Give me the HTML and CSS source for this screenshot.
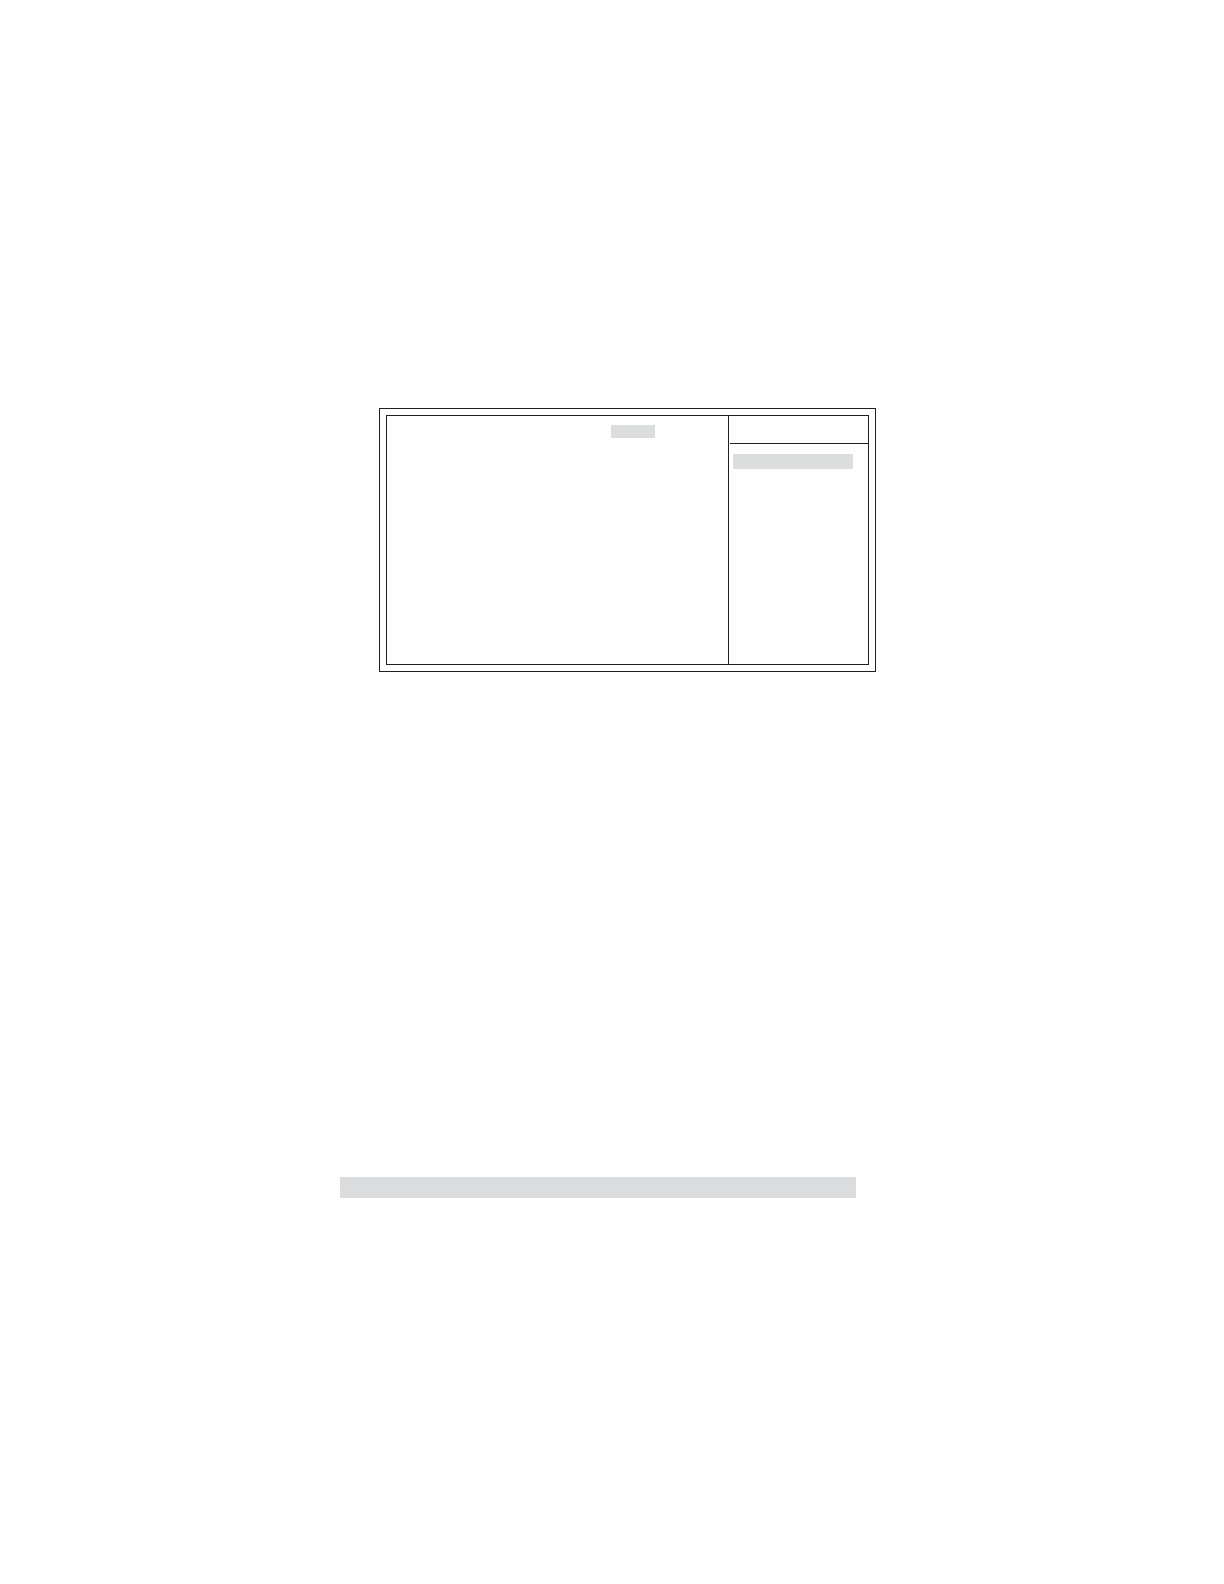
FILE: index.html
```html
<!DOCTYPE html>
<html lang="en">
<head>
<meta charset="utf-8">
<meta name="viewport" content="width=device-width, initial-scale=1">
<title>Setup screen</title>
<link rel="stylesheet" href="styles.css">
</head>
<body>
<main class="page">
  <section class="frame">
    <div class="screen">
      <div class="settings"><div class="value"></div></div>
      <aside class="help">
        <div class="help-title"></div>
        <div class="help-item"></div>
      </aside>
    </div>
  </section>
  <div class="band"></div>
</main>
</body>
</html>
```

FILE: styles.css
```css
* {
  box-sizing: border-box;
}

body {
  margin: 0;
  background: #fefefe;
  font-family: "Liberation Sans", sans-serif;
}

.page {
  display: flex;
  flex-direction: column;
  gap: 505px;
  padding: 408px 24px 386px 340px;
}

.frame {
  width: 100%;
  max-width: 536px;
  padding-left: 39px;
}

.screen {
  display: grid;
  grid-template-columns: 1fr 140px;
  min-height: 250px;
  margin: 7px;
  border: 1px solid #231f20;
  outline: 1px solid #231f20;
  outline-offset: 6px;
}

.frame,
.help {
  display: flow-root;
}

.settings {
  display: flex;
  justify-content: flex-end;
  align-items: flex-start;
  padding: 9px 73px 9px 9px;
}

.value {
  width: 44px;
  height: 13px;
  background: #dcdddd;
}

.help {
  border-left: 1px solid #231f20;
}

.help-title {
  height: 28px;
  margin-left: 1px;
  border-bottom: 1px solid #231f20;
}

.help-item {
  height: 15px;
  margin: 10px 15px 0 4px;
  background: #dcdddd;
}

.band {
  width: 100%;
  max-width: 516px;
  height: 21px;
  background: #dadcdd;
}
```
